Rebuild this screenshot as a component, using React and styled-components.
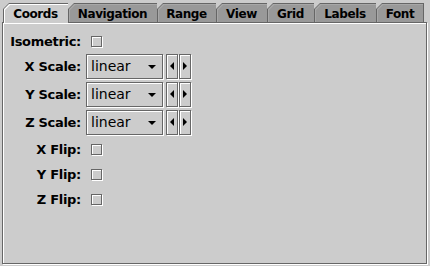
import React from "react";
import styled, { createGlobalStyle } from "styled-components";

const Global = createGlobalStyle`
  html, body { margin: 0; padding: 0; background: #cccccc; }
  body { font-family: "DejaVu Sans", sans-serif; }
`;

const Frame = styled.div`
  width: 430px;
  height: 266px;
  box-sizing: border-box;
  background: #cccccc;
  padding: 3px 2px 2px 2px;
  display: flex;
  flex-direction: column;
`;

const TabStrip = styled.div`
  display: flex;
  align-items: flex-start;
  height: 19px;
  margin-left: 1px;
  position: relative;
  z-index: 2;
`;

const Tab = styled.div`
  position: relative;
  box-sizing: border-box;
  width: ${(p) => p.$w}px;
  height: ${(p) => (p.$sel ? 20 : 19)}px;
  background: #666666;
  clip-path: polygon(0 6px, 6px 0, 100% 0, 100% 100%, 0 100%);
  display: flex;
  align-items: center;
  justify-content: center;
  font: bold 12px "DejaVu Sans", sans-serif;
  letter-spacing: -0.4px;
  color: #000;
  padding-top: ${(p) => (p.$sel ? 1 : 2)}px;
  &::before {
    content: "";
    position: absolute;
    left: 1px;
    top: 1px;
    right: ${(p) => (p.$last ? 1 : 0)}px;
    bottom: 0;
    background: ${(p) => (p.$sel ? "#ffffff" : "#a8a8a8")};
    clip-path: polygon(0 5px, 5px 0, 100% 0, 100% 100%, 0 100%);
  }
  &::after {
    content: "";
    position: absolute;
    left: 2px;
    top: 2px;
    right: ${(p) => (p.$last ? 1 : 0)}px;
    bottom: 0;
    background: ${(p) => (p.$sel ? "#cccccc" : "#999999")};
    clip-path: polygon(0 5px, 5px 0, 100% 0, 100% 100%, 0 100%);
  }
`;

const TabLabel = styled.span`
  position: relative;
  z-index: 1;
`;

const Panel = styled.div`
  flex: 1;
  box-sizing: border-box;
  border: 1px solid #666666;
  box-shadow: inset 1px 1px 0 #ffffff, 1px 1px 0 #ffffff;
  background: #cccccc;
  padding: 7px 0 0 5px;
  display: flex;
  flex-direction: column;
  margin-right: 1px;
`;

const Row = styled.div`
  display: flex;
  align-items: center;
  height: ${(p) => p.$h}px;
  margin-top: ${(p) => p.$mt || 0}px;
`;

const Label = styled.div`
  width: 73px;
  text-align: right;
  font: bold 13px "DejaVu Sans", sans-serif;
  letter-spacing: -0.3px;
  color: #000;
  margin-right: 5px;
  white-space: nowrap;
`;

const Check = styled.span`
  display: inline-block;
  box-sizing: border-box;
  width: 11px;
  height: 11px;
  margin-left: 5px;
  border: 1px solid #666666;
  box-shadow: 1px 1px 0 #ffffff, inset 1px 1px 0 #ffffff;
`;

const Combo = styled.div`
  box-sizing: border-box;
  width: 77px;
  height: 25px;
  border: 1px solid #666666;
  box-shadow: inset 1px 1px 0 #ffffff, 1px 1px 0 #ffffff;
  display: flex;
  align-items: center;
  justify-content: space-between;
  padding: 0 6px 0 4px;
  font: 14px "DejaVu Sans", sans-serif;
  color: #000;
`;

const DownArrow = styled.span`
  width: 0;
  height: 0;
  border-left: 4px solid transparent;
  border-right: 4px solid transparent;
  border-top: 4px solid #000;
  margin-top: 1px;
`;

const ArrowPair = styled.div`
  display: flex;
  margin-left: 3px;
`;

const ArrowButton = styled.div`
  box-sizing: border-box;
  width: 12px;
  height: 25px;
  margin-right: 1px;
  border: 1px solid #666666;
  box-shadow: inset 1px 1px 0 #ffffff, 1px 1px 0 #ffffff;
  display: flex;
  align-items: center;
  justify-content: center;
`;

const SideArrow = styled.span`
  width: 0;
  height: 0;
  border-top: 4px solid transparent;
  border-bottom: 4px solid transparent;
  ${(p) =>
    p.$dir === "left"
      ? "border-right: 4px solid #000;"
      : "border-left: 4px solid #000;"}
`;

const tabs = [
  { name: "Coords", w: 65 },
  { name: "Navigation", w: 89 },
  { name: "Range", w: 59 },
  { name: "View", w: 51 },
  { name: "Grid", w: 47 },
  { name: "Labels", w: 62 },
  { name: "Font", w: 48 },
];

function ScaleRow({ label }) {
  return (
    <Row $h={28}>
      <Label>{label}</Label>
      <Combo>
        <span>linear</span>
        <DownArrow />
      </Combo>
      <ArrowPair>
        <ArrowButton>
          <SideArrow $dir="left" />
        </ArrowButton>
        <ArrowButton>
          <SideArrow $dir="right" />
        </ArrowButton>
      </ArrowPair>
    </Row>
  );
}

function CheckRow({ label, h, mt }) {
  return (
    <Row $h={h} $mt={mt}>
      <Label>{label}</Label>
      <Check />
    </Row>
  );
}

export default function App() {
  return (
    <>
      <Global />
      <Frame>
        <TabStrip>
          {tabs.map((t, i) => (
            <Tab
              key={t.name}
              $w={t.w}
              $sel={i === 0}
              $last={i === tabs.length - 1}
            >
              <TabLabel>{t.name}</TabLabel>
            </Tab>
          ))}
        </TabStrip>
        <Panel>
          <CheckRow label="Isometric:" h={22} />
          <ScaleRow label="X Scale:" />
          <ScaleRow label="Y Scale:" />
          <ScaleRow label="Z Scale:" />
          <CheckRow label="X Flip:" h={25} mt={1} />
          <CheckRow label="Y Flip:" h={25} />
          <CheckRow label="Z Flip:" h={25} />
        </Panel>
      </Frame>
    </>
  );
}
